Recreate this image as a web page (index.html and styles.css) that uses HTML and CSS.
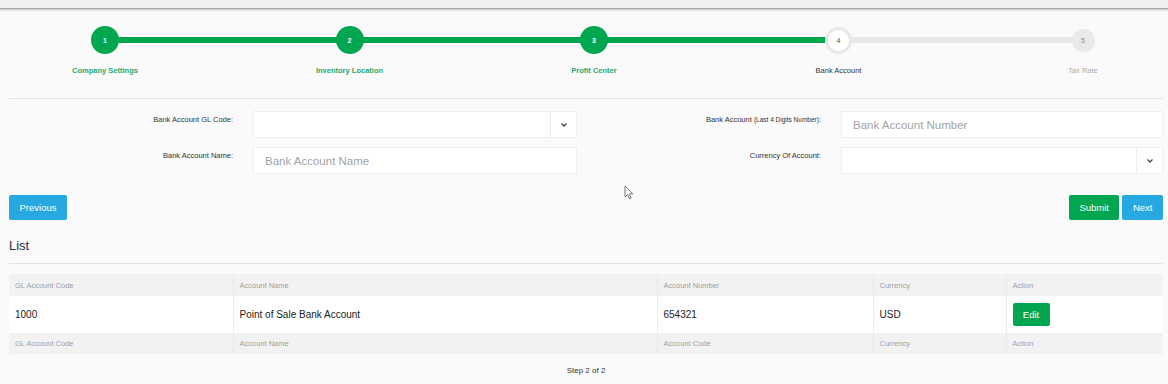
FILE: index.html
```
<!DOCTYPE html>
<html lang="en">
<head>
    <meta charset="UTF-8">
    <meta name="viewport" content="width=device-width, initial-scale=1.0">
    <title>Setup Wizard - Bank Account</title>
    <link rel="stylesheet" href="styles.css">
</head>
<body>

    <div class="topbar"></div>

    <div class="container">
        <!-- Wizard steps -->
        <div class="stepper">
            <div class="track"><div class="track-fill"></div></div>
            <div class="step done">
                <div class="circle-wrap"><span class="circle">1</span></div>
                <p class="step-label">Company Settings</p>
            </div>
            <div class="step done">
                <div class="circle-wrap"><span class="circle">2</span></div>
                <p class="step-label">Inventory Location</p>
            </div>
            <div class="step done">
                <div class="circle-wrap"><span class="circle">3</span></div>
                <p class="step-label">Profit Center</p>
            </div>
            <div class="step current">
                <div class="circle-wrap"><span class="circle">4</span></div>
                <p class="step-label">Bank Account</p>
            </div>
            <div class="step todo">
                <div class="circle-wrap"><span class="circle">5</span></div>
                <p class="step-label">Tax Rate</p>
            </div>
        </div>

        <!-- Form -->
        <div class="form-grid">
            <label class="form-label">Bank Account GL Code:</label>
            <div class="select">
                <div class="select-value"></div>
                <div class="select-arrow">
                    <svg width="6" height="4" viewBox="0 0 6 4"><path d="M0.5 0.5 L3 3 L5.5 0.5" fill="none" stroke="#444" stroke-width="1.3"/></svg>
                </div>
            </div>
            <label class="form-label">Bank Account <small>(Last 4 Digits Number)</small>:</label>
            <input type="text" class="textbox" placeholder="Bank Account Number">

            <label class="form-label">Bank Account Name:</label>
            <input type="text" class="textbox" placeholder="Bank Account Name">
            <label class="form-label">Currency Of Account:</label>
            <div class="select">
                <div class="select-value"></div>
                <div class="select-arrow">
                    <svg width="6" height="4" viewBox="0 0 6 4"><path d="M0.5 0.5 L3 3 L5.5 0.5" fill="none" stroke="#444" stroke-width="1.3"/></svg>
                </div>
            </div>
        </div>

        <div class="actions">
            <button class="btn btn-blue">Previous</button>
            <div class="actions-right">
                <button class="btn btn-green">Submit</button>
                <button class="btn btn-blue">Next</button>
            </div>
        </div>

        <h3 class="list-title">List</h3>

        <table class="list-table">
            <thead>
                <tr>
                    <th class="col-code">GL Account Code</th>
                    <th class="col-name">Account Name</th>
                    <th class="col-number">Account Number</th>
                    <th class="col-currency">Currency</th>
                    <th>Action</th>
                </tr>
            </thead>
            <tbody>
                <tr>
                    <td>1000</td>
                    <td>Point of Sale Bank Account</td>
                    <td>654321</td>
                    <td>USD</td>
                    <td><button class="btn btn-green btn-edit">Edit</button></td>
                </tr>
            </tbody>
            <tfoot>
                <tr>
                    <th>GL Account Code</th>
                    <th>Account Name</th>
                    <th>Account Code</th>
                    <th>Currency</th>
                    <th>Action</th>
                </tr>
            </tfoot>
        </table>

        <p class="step-count">Step 2 of 2</p>
    </div>

    <!-- mouse pointer captured in the screenshot -->
    <svg class="cursor" width="11" height="15" viewBox="0 0 11 15">
        <path d="M1 1 L1 12 L3.6 9.6 L5.6 13.8 L7.2 13 L5.3 8.9 L8.8 8.9 Z" fill="#fff" stroke="#666" stroke-width="0.9" stroke-linejoin="round"/>
    </svg>

</body>
</html>
```

FILE: styles.css
```
/* Basic reset */
* {
    margin: 0;
    padding: 0;
    box-sizing: border-box;
}

body {
    background-color: #fafafa;
    font-family: "Liberation Sans", Arial, sans-serif;
    color: #333;
    width: 1168px;
    height: 384px;
    overflow: hidden;
    position: relative;
}

/* Top strip */
.topbar {
    height: 9px;
    background-color: #f0f0f0;
    border-bottom: 1px solid #a9a9a9;
    box-shadow: 0 1px 2px rgba(0, 0, 0, 0.25);
}

.container {
    padding: 0 5px 0 9px;
}

/* Wizard steps */
.stepper {
    position: relative;
    display: flex;
    justify-content: space-between;
    padding: 17px 20px 0 36px;
    height: 90px;
    border-bottom: 1px solid #e3e3e3;
}

.track {
    position: absolute;
    top: 28px;
    left: 96px;
    width: 978px;
    height: 6px;
    background-color: #e8e8e8;
}

.track-fill {
    width: 734px;
    height: 100%;
    background-color: #00a650;
}

.step {
    position: relative;
    width: 120px;
    display: flex;
    flex-direction: column;
    align-items: center;
}

.circle-wrap {
    height: 28px;
    display: flex;
    align-items: center;
    justify-content: center;
}

.circle {
    width: 28px;
    height: 28px;
    border-radius: 50%;
    display: flex;
    align-items: center;
    justify-content: center;
    font-size: 7px;
    font-weight: bold;
}

.step-label {
    margin-top: 12px;
    font-size: 7.5px;
    font-weight: bold;
    line-height: 9px;
}

.done .circle {
    background-color: #00a650;
    color: #fff;
}

.done .step-label {
    color: #27a86c;
}

.current .circle {
    width: 27px;
    height: 27px;
    background-color: #fff;
    border: 3px solid #e8e8e8;
    color: #555;
    font-weight: normal;
}

.current .step-label {
    color: #333;
    font-weight: normal;
}

.todo .circle {
    width: 23px;
    height: 23px;
    background-color: #e9e9e9;
    color: #888;
    font-weight: normal;
}

.todo .step-label {
    color: #aaa;
    font-weight: normal;
}

/* Form */
.form-grid {
    display: grid;
    grid-template-columns: 224px 324px 224px 1fr;
    column-gap: 20px;
    row-gap: 9px;
    margin-top: 12px;
}

.form-label {
    text-align: right;
    font-size: 7.5px;
    padding-top: 4px;
    color: #333;
}

.form-label small {
    font-size: 6.5px;
}

.textbox {
    height: 27px;
    width: 100%;
    border: 1px solid #efefef;
    background-color: #fff;
    padding: 0 11px;
    font-family: "Liberation Sans", Arial, sans-serif;
    font-size: 11.5px;
    color: #333;
    outline: none;
}

.textbox::placeholder {
    color: #a3a3a3;
}

.select {
    height: 27px;
    display: flex;
    background-color: #fff;
    border: 1px solid #efefef;
}

.select-value {
    flex: 1;
}

.select-arrow {
    width: 26px;
    border-left: 1px solid #ececec;
    display: flex;
    align-items: center;
    justify-content: center;
}

/* Buttons */
.actions {
    display: flex;
    justify-content: space-between;
    margin-top: 21px;
}

.actions-right {
    display: flex;
    gap: 3px;
}

.btn {
    height: 25px;
    padding: 0 10.5px;
    border: none;
    border-radius: 2px;
    color: #fff;
    font-family: "Liberation Sans", Arial, sans-serif;
    font-size: 9.5px;
    cursor: pointer;
}

.btn-blue {
    background-color: #25a9e0;
}

.btn-green {
    background-color: #00a650;
}

/* List */
.list-title {
    margin-top: 18px;
    font-size: 13px;
    font-weight: normal;
    line-height: 16px;
    color: #2e2e48;
    padding-bottom: 9px;
    border-bottom: 1px solid #e3e3e3;
}

.list-table {
    width: 100%;
    margin-top: 10px;
    border-collapse: collapse;
    table-layout: fixed;
}

.list-table th {
    height: 22px;
    padding: 0 6px;
    text-align: left;
    font-size: 7.5px;
    font-weight: normal;
    color: #a0a0a0;
    background-color: #f2f2f2;
    border-left: 1px solid #e9e9e9;
}

.list-table tfoot th {
    height: 21px;
}

.list-table td {
    height: 37px;
    padding: 0 6px;
    font-size: 10px;
    color: #222;
    background-color: #fff;
    border-left: 1px solid #eeeeee;
}

.list-table th:first-child,
.list-table td:first-child {
    border-left: none;
}

.col-code { width: 224px; }
.col-name { width: 424px; }
.col-number { width: 216px; }
.col-currency { width: 133px; }

.btn-edit {
    height: 23px;
    width: 37px;
    padding: 0;
    font-size: 9.5px;
}

.step-count {
    margin-top: 12px;
    text-align: center;
    font-size: 8px;
    line-height: 10px;
    color: #333;
}

/* Cursor overlay */
.cursor {
    position: absolute;
    left: 624px;
    top: 185px;
}
```
